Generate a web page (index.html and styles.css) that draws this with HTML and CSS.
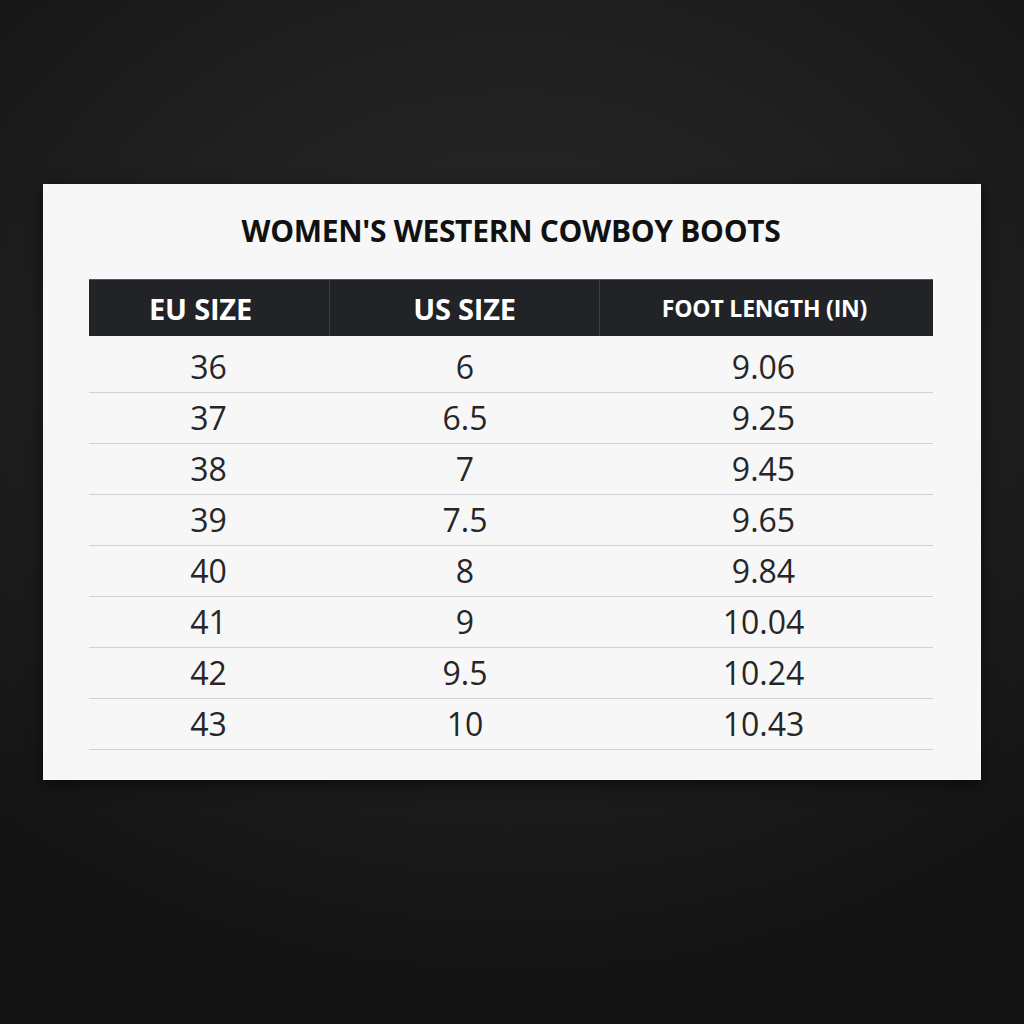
FILE: index.html
```html
<!DOCTYPE html>
<html>
<head>
<meta charset="utf-8">
<link rel="stylesheet" href="styles.css">
</head>
<body>
<div class="page">
  <div class="card">
    <h1 class="title">WOMEN'S WESTERN COWBOY BOOTS</h1>
    <div class="table">
      <div class="head">
        <div class="hcell c1">EU SIZE</div>
        <div class="hcell c2">US SIZE</div>
        <div class="hcell c3 small">FOOT LENGTH (IN)</div>
      </div>
      <div class="body">
        <div class="row"><div class="cell">36</div><div class="cell">6</div><div class="cell">9.06</div></div>
        <div class="row"><div class="cell">37</div><div class="cell">6.5</div><div class="cell">9.25</div></div>
        <div class="row"><div class="cell">38</div><div class="cell">7</div><div class="cell">9.45</div></div>
        <div class="row"><div class="cell">39</div><div class="cell">7.5</div><div class="cell">9.65</div></div>
        <div class="row"><div class="cell">40</div><div class="cell">8</div><div class="cell">9.84</div></div>
        <div class="row"><div class="cell">41</div><div class="cell">9</div><div class="cell">10.04</div></div>
        <div class="row"><div class="cell">42</div><div class="cell">9.5</div><div class="cell">10.24</div></div>
        <div class="row"><div class="cell">43</div><div class="cell">10</div><div class="cell">10.43</div></div>
      </div>
    </div>
  </div>
</div>
</body>
</html>
```
FILE: styles.css
```css
* { box-sizing: border-box; }
html, body { margin: 0; padding: 0; }
body {
  width: 1024px;
  height: 1024px;
  background: radial-gradient(ellipse 75% 60% at 50% 35%, #2a2a2b 0%, #1f1f20 55%, #141415 100%);
  font-family: "Open Sans", "Noto Sans", sans-serif;
}
.page {
  padding-top: 184px;
  padding-left: 43px;
}
.card {
  width: 938px;
  height: 596px;
  background: #f7f7f7;
  box-shadow: 0 4px 14px rgba(0,0,0,0.55);
  padding: 0 48px 0 46px;
}
.title {
  margin: 0;
  height: 95px;
  padding-top: 29px;
  text-align: center;
  font-size: 30px;
  line-height: 36px;
  font-weight: 700;
  color: #111;
  letter-spacing: -0.3px;
}
.table { width: 844px; }
.head {
  display: grid;
  grid-template-columns: 241px 270px 333px;
  height: 57px;
  background: #222326;
  border-top: 1px solid #555;
}
.hcell {
  display: flex;
  align-items: center;
  justify-content: center;
  color: #fff;
  font-weight: 700;
  font-size: 29px;
  letter-spacing: -0.2px;
}
.hcell.c1 { padding-right: 17px; }
.hcell.small { font-size: 23px; padding-right: 4px; }
.c1, .c2 { border-right: 1px solid #3e3f43; }
.body { padding-top: 6px; }
.row {
  display: grid;
  grid-template-columns: 241px 270px 333px;
  height: 51px;
  border-bottom: 1.5px solid #cfd0d8;
}
.cell {
  display: flex;
  align-items: center;
  justify-content: center;
  font-size: 32px;
  color: #262628;
  padding-bottom: 2px;
}
.row .cell:first-child { padding-right: 2px; }
.row .cell:last-child { padding-right: 6px; }
```
